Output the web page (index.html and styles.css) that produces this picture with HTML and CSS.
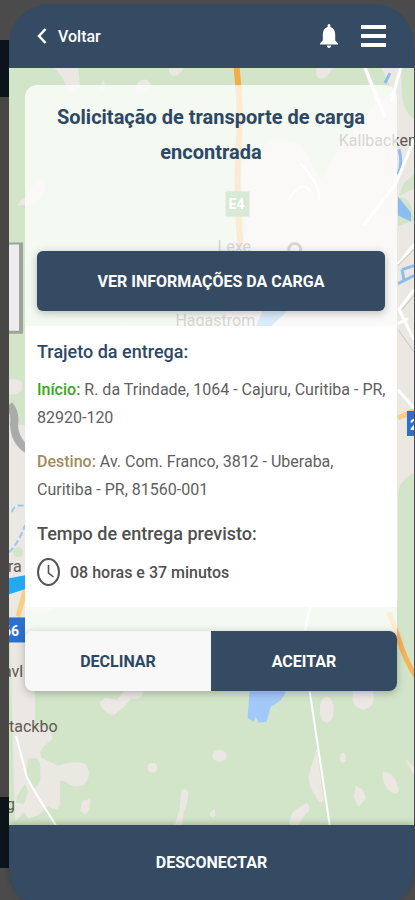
FILE: index.html
```
<!DOCTYPE html>
<html lang="pt-BR">
<head>
    <meta charset="UTF-8">
    <meta name="viewport" content="width=device-width, initial-scale=1.0">
    <title>Solicitação de transporte</title>
    <link rel="stylesheet" href="styles.css">
</head>
<body>
<div class="phone">
    <header class="topbar">
        <a class="back" href="#">
            <svg width="10" height="16" viewBox="0 0 10 16" aria-hidden="true"><path d="M8.5 1 2 8l6.500 7" fill="none" stroke="#fff" stroke-width="2.500"/></svg>
            Voltar
        </a>
        <div class="topbar-icons">
            <button class="icon-button" aria-label="Notificações">
                <svg width="18" height="24" viewBox="0 0 18 24" aria-hidden="true"><path fill="#fff" d="M9 0C8 0 7.600.8 7.600 1.700V3C4.400 4 2.800 6.800 2.800 10.500V16.500L0 19.500V20.500H18V19.500L15.200 16.500V10.500C15.200 6.800 13.600 4 10.400 3V1.700C10.400.8 10 0 9 0ZM6.900 21.500C6.900 23 7.800 24 9 24S11.100 23 11.100 21.500Z"/></svg>
            </button>
            <button class="icon-button" aria-label="Menu">
                <svg width="26" height="24" viewBox="0 0 26 24" aria-hidden="true"><path fill="#fff" d="M1 1h25v4H1zM1 10h25v4H1zM1 19h25v4H1z"/></svg>
            </button>
        </div>
    </header>

    <main>
        <!-- Mapa de fundo -->
        <svg class="map" viewBox="9 68 404 757" preserveAspectRatio="xMidYMid slice" aria-hidden="true">
            <rect x="9" y="68" width="404" height="757" fill="#d2e5c9"/>

            <!-- Áreas urbanas -->
            <g fill="#ebe8e3">
                <path d="M53 68h25l2 20q-8 10-14 0-3-12-13-20z"/>
                <path d="M168 68h16q-4 8-11 9-5-2-5-9z"/>
                <path d="M316 68h16q-6 12-13 12-5-3-3-12z"/>
                <path d="M138 83q8-6 12 2l-3 9-12-2zM99 90l4-10 3 12z"/>
                <path d="M17 206q3-6 10-8 4-12 15-18 6 9 0 18-8 9-25 8z"/>
                <path d="M362 68h51v405q-16 8-16 22V600H25V500L120 325 200 330 225 318 240 255 246 228 240 170 258 150 270 140 300 145 320 180 345 140 375 105z"/>
                <path d="M9 380q8-2 13 2v9q-8 6-13 3zM9 425h16v175H9z"/>
                <path d="M9 596h44v14H25l10 86v30l10 1q8 3 7 12-8 5-12 12l1 6 17 8q18-6 27-2 8 10-1 21-12 4-18-3l-6-1v23q-2 9-12 2-10 12-20 12l-4-6-9 10z"/>
                <path d="M99 702l6-5 12 2 8-10 18 2q-2 9-12 7l-7 8-10 8q-10 0-15-12z"/>
                <path d="M352 691h20q4 16-10 18-12-2-10-18z"/>
                <ellipse cx="326" cy="709" rx="7" ry="13"/>
                <ellipse cx="219" cy="755" rx="7" ry="6"/>
                <ellipse cx="152" cy="767" rx="5" ry="5"/>
                <ellipse cx="342" cy="757" rx="3" ry="5"/>
                <path d="M316 748l7 52q-4 5-8-5-8-10-7-21zM181 789q4-2 7 2-1 14-5 20l-1 14h-8l5-15z"/>
                <path d="M82 800l8-2-1 11-4 4-5-3zM210 811l4-3 1 6-3 3-3-3zM289 825q-1-12 7-17l10-6q6 6-1 11l-8 12zM355 785l6 3 4 9-7 9-5-9zM382 771q12 0 16 18-1 6-8 2-10-9-8-20zM404 758l9 8v8z"/>
            </g>
            <g fill="#d2e5c9">
                <path d="M28 758q14-4 12 12 2 13-5 17-8-3-9-12zM17 795l8-12 3 8-4 12-8-1z"/>
                <path d="M362 68h18l12 25-10 8zM400 68h13v52q-9-6-12-22z"/>
                <ellipse cx="18" cy="552" rx="5" ry="5"/>
                <path d="M413 175v14l-15 8 4-12zM397 198q14-2 16 23l-16 6z"/>
            </g>

            <!-- Água -->
            <path fill="#a3c8fa" d="M249 691h36q-3 10-15 15l-4 15-8 1-3-6-2 5-6-4z"/>
            <path fill="#6db4f0" d="M262 311h25l-17 16h-15z"/>
            <path fill="#8dbcf1" d="M397 197l13 16v9l-13-6z"/>
            <path fill="none" stroke="#8dbcf1" stroke-width="3" d="M397 284l16-8M401 270l2 10M401 270l12-4M398 150q4 14-1 25M389 74l-5 10"/>
            <path fill="#21aaf2" d="M9 578l16-3v14l-16 5z"/>
            <path fill="none" stroke="#98c8ee" stroke-width="2" stroke-dasharray="6 3" d="M9 552q9-8 16-27M12 512q2-9 13-6"/>

            <!-- Estradas -->
            <g fill="none" stroke="#fff" stroke-width="3">
                <path d="M364 68l12 30 8 20M413 140l-18 44-32 42M400 68l-10 35M397 265l16-20M413 290l-15 20 15 30M397 324l10-5M397 390l16 18M310 604l-6 28"/>
                <path stroke-width="2" d="M16 735l11 42 9 16 20 32M309 691l20 134M300 165q20 20 18 35M288 200q12-20 22-8"/>
            </g>
            <path fill="none" stroke="#ccc9c5" d="M397 330l16 22M397 266l16-16M401 310l12-14"/>
            <path fill="none" stroke="#aaa" stroke-width="8" d="M9 405q7 8 5 20 1 20 20 28"/>
            <path fill="none" stroke="#f4ac4b" stroke-width="6" d="M236 68q5 40 2 80t2 100"/>
            <path fill="none" stroke="#f5b35b" stroke-width="5" d="M388 612l9 24q8 26 18 40"/>
            <path fill="none" stroke="#f8ce82" stroke-width="5" d="M397 418l16-7M18 616l7-26"/>

            <!-- Caixa recortada à esquerda -->
            <path fill="#9da396" d="M9 243h14v91H9z"/>
            <path fill="#eeecef" d="M9 245h10v86H9z"/>

            <!-- Placas -->
            <rect x="225" y="192" width="24" height="25" fill="#64a65b"/>
            <rect x="9" y="617" width="16" height="25" fill="#2d70cc"/>
            <rect x="406" y="411" width="7" height="25" fill="#2d70cc"/>
            <g class="map-sign">
                <text x="228" y="210">E4</text>
                <text x="3" y="636">66</text>
                <text x="409" y="430">2</text>
            </g>
            <circle cx="294" cy="250" r="6" fill="none" stroke="#666" stroke-width="3"/>
            <g class="map-label">
                <text x="338" y="147">Kallbacken</text>
                <text x="217" y="252">Lexe</text>
                <text x="175" y="326">Hagastrom</text>
                <text x="8" y="572">ra</text>
                <text x="3" y="676">avl</text>
                <text x="9" y="731">tackbo</text>
                <text x="6" y="809">g</text>
            </g>
        </svg>

        <section class="card">
            <div class="card-top">
                <h1>Solicitação de transporte de carga encontrada</h1>
                <button class="btn btn-info">VER INFORMAÇÕES DA CARGA</button>
            </div>
            <div class="details">
                <h2>Trajeto da entrega:</h2>
                <p><span class="start">Início:</span> R. da Trindade, 1064 - Cajuru, Curitiba - PR, 82920-120</p>
                <p><span class="end">Destino:</span> Av. Com. Franco, 3812 - Uberaba, Curitiba - PR, 81560-001</p>
                <h2 class="time-title">Tempo de entrega previsto:</h2>
                <div class="time">
                    <svg width="24" height="30" viewBox="0 0 24 30" aria-hidden="true"><ellipse cx="11.500" cy="15" rx="10.500" ry="13" fill="none" stroke="#555" stroke-width="2"/><path d="M11.500 8v8l5 4" fill="none" stroke="#555" stroke-width="1.600"/></svg>
                    <span>08 horas e 37 minutos</span>
                </div>
            </div>
            <div class="actions">
                <button class="btn btn-decline">DECLINAR</button>
                <button class="btn btn-accept">ACEITAR</button>
            </div>
        </section>
    </main>

    <footer>
        <button class="disconnect">DESCONECTAR</button>
    </footer>
</div>
</body>
</html>
```
FILE: styles.css
```
* {
    box-sizing: border-box;
}

body {
    margin: 0;
    font-family: Roboto, 'Liberation Sans', sans-serif;
    color: #606060;
    background: #4b4b4b linear-gradient(#4b4b4b 40px, #0c131b 40px, #0c131b 97px, #484746 97px, #484746 797px, #0c131b 797px, #0c131b 868px, #4b4b4b 868px) left top / 9px 100% no-repeat;
}

h1, h2, p {
    margin: 0;
}

button {
    font-family: inherit;
    border: none;
    cursor: pointer;
}

.phone {
    display: flex;
    flex-direction: column;
    min-height: 100vh;
    padding: 4px 1px 0 9px;
}

.topbar {
    display: flex;
    align-items: center;
    justify-content: space-between;
    height: 64px;
    padding: 0 28px;
    background: #344b63;
    border-radius: 40px 40px 0 0;
}

.back {
    display: flex;
    align-items: center;
    gap: 11px;
    color: #fff;
    font-size: 16px;
    font-weight: 500;
    text-decoration: none;
}

.topbar-icons {
    display: flex;
    align-items: center;
    gap: 22px;
}

.icon-button {
    display: flex;
    padding: 0;
    background: none;
}

main {
    position: relative;
    flex: 1;
    padding: 17px 17px 17px 16px;
    overflow: hidden;
}

.map {
    position: absolute;
    top: 0;
    left: 0;
    width: 100%;
    height: 100%;
}

.map-label {
    fill: #5f5951;
    font-size: 16px;
}

.map-sign {
    fill: #fff;
    font-size: 14px;
    font-weight: 700;
}

.card {
    position: relative;
    background: rgba(255, 255, 255, 0.75);
    border-radius: 12px;
}

.card-top {
    padding: 15px 12px;
}

h1 {
    margin-bottom: 81px;
    color: #2c4864;
    font-size: 20px;
    font-weight: 700;
    line-height: 35px;
    text-align: center;
}

.btn {
    height: 60px;
    font-size: 16px;
    font-weight: 700;
}

.btn-info {
    width: 100%;
    color: #fff;
    background: #344b63;
    border-radius: 6px;
    box-shadow: 0 2px 8px rgba(0, 0, 0, 0.25);
}

.details {
    padding: 12px 8px 12px 12px;
    background: #fff;
}

h2 {
    margin-bottom: 10px;
    color: #2c4864;
    font-size: 18px;
    font-weight: 500;
    line-height: 28px;
}

.details p {
    margin-bottom: 16px;
    font-size: 16px;
    line-height: 28px;
}

.start,
.end {
    font-weight: 500;
}

.start {
    color: #35a91a;
}

.end {
    color: #a28c5d;
}

.details .time-title {
    margin-bottom: 9px;
    color: #505050;
}

.time {
    display: flex;
    align-items: center;
    gap: 9px;
    padding-bottom: 8px;
    color: #505050;
    font-size: 16px;
    font-weight: 500;
}

.actions {
    display: flex;
    margin-top: 24px;
    border-radius: 8px;
    overflow: hidden;
    box-shadow: 0 2px 8px rgba(0, 0, 0, 0.25);
}

.actions .btn {
    flex: 1;
}

.btn-decline {
    color: #2c4864;
    background: #f8f8f8;
}

.btn-accept {
    color: #fff;
    background: #344b63;
}

footer {
    position: relative;
    background: #344b63;
    border-radius: 0 0 18px 18px / 0 0 36px 36px;
    box-shadow: 0 -2px 6px rgba(0, 0, 0, 0.2);
}

.disconnect {
    width: 100%;
    height: 75px;
    color: #fff;
    background: none;
    font-size: 16px;
    font-weight: 700;
}
```
